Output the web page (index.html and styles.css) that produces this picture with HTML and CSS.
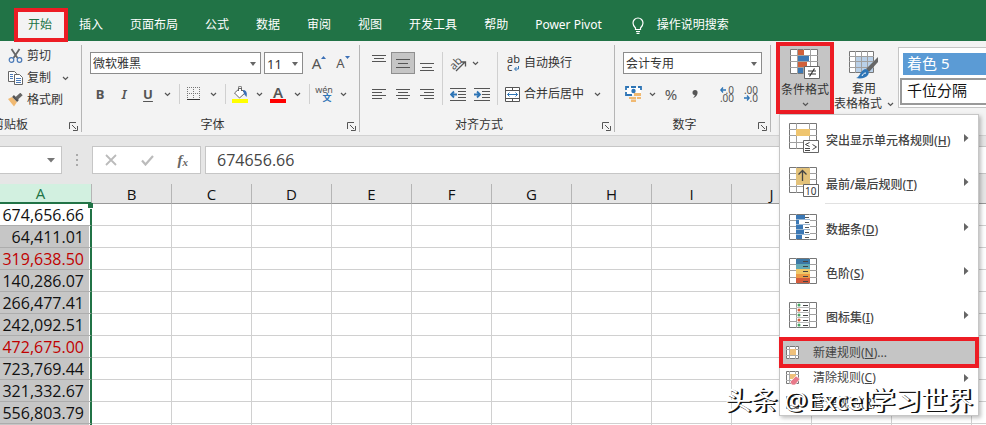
FILE: index.html
```html
<!DOCTYPE html>
<html lang="zh-CN">
<head>
    <meta charset="UTF-8">
    <meta name="viewport" content="width=device-width, initial-scale=1.0">
    <title>Excel</title>
    <link rel="stylesheet" href="styles.css">
</head>
<body>

    <!-- shared shapes -->
    <svg class="defs" width="0" height="0">
        <symbol id="chev" viewBox="0 0 7 5"><path d="M1 1l2.500 2.500L6 1" fill="none" stroke="#555" stroke-width="1.200"/></symbol>
        <symbol id="caret" viewBox="0 0 6 4"><path d="M0 0h6L3 4z" fill="#666"/></symbol>
        <symbol id="arrow" viewBox="0 0 5 8"><path d="M0 0l4.500 4L0 8z" fill="#666"/></symbol>
        <symbol id="launch" viewBox="0 0 9 9"><path d="M.5 7V.5H7M3 3l4 4M8.500 4v4.500H4" fill="none" stroke="#555"/></symbol>
        <symbol id="grid" viewBox="0 0 28 26"><path d="M.5.5h27v25H.5z" fill="#fff" stroke="#777"/><path d="M7.500 0v26M20.500 0v26M0 6.500h28M0 12.500h28M0 19.500h28" stroke="#a0a0a0"/></symbol>
    </svg>

    <nav class="tabs">
        <button class="tab active">开始</button>
        <button class="tab">插入</button>
        <button class="tab">页面布局</button>
        <button class="tab">公式</button>
        <button class="tab">数据</button>
        <button class="tab">审阅</button>
        <button class="tab">视图</button>
        <button class="tab">开发工具</button>
        <button class="tab">帮助</button>
        <button class="tab">Power Pivot</button>
        <button class="tab tell-me">
            <svg width="12" height="17" viewBox="0 0 12 17"><path d="M3.500 12.500V11C2 9.500 1 8 1 6a5 5 0 0 1 10 0c0 2-1 3.500-2.500 5v1.500zM4 14.500h4M4.500 16.300h3" fill="none" stroke="#fff" stroke-width="1.200"/></svg>
            操作说明搜索
        </button>
    </nav>

    <section class="ribbon">
        <div class="group clipboard">
            <div class="clip-list">
                <button class="clip">
                    <svg width="15" height="16" viewBox="0 0 15 16"><path d="M3.500 1l6 9M11.500 1L5.500 10" stroke="#666" stroke-width="1.800"/><circle cx="3.500" cy="12" r="2.300" fill="none" stroke="#4a7ab8" stroke-width="1.200"/><circle cx="11.500" cy="12" r="2.300" fill="none" stroke="#4a7ab8" stroke-width="1.200"/></svg>
                    剪切
                </button>
                <button class="clip">
                    <svg width="15" height="14" viewBox="0 0 15 14"><path d="M.5.5h6l2 2v8h-8z" fill="#fff" stroke="#666"/><path d="M6.500 3.500h5l3 3v7h-8z" fill="#fff" stroke="#666"/><path d="M2 3.500h3M2 5.500h3M2 7.500h3M8 7.500h5M8 9.500h5M8 11.500h5" stroke="#4a7ab8"/></svg>
                    复制
                    <svg class="clip-chev" width="7" height="5"><use href="#chev"/></svg>
                </button>
                <button class="clip">
                    <svg width="15" height="14" viewBox="0 0 15 14"><path d="M0 6l4-2 5 5-3 4.500z" fill="#f0b972"/><path d="M5 3l5 5" stroke="#555" stroke-width="2.500"/><path d="M8.500 5.500L13.500 1" stroke="#666" stroke-width="3.500"/></svg>
                    格式刷
                </button>
            </div>
            <div class="group-foot"><span>剪贴板</span><button class="launcher" aria-label="剪贴板设置"><svg width="9" height="9"><use href="#launch"/></svg></button></div>
        </div>

        <div class="group font">
            <div class="group-body">
                <div class="row combos">
                    <label class="combo font-name"><select aria-label="字体"><option>微软雅黑</option></select><svg width="6" height="4"><use href="#caret"/></svg></label>
                    <label class="combo font-size"><select aria-label="字号"><option>11</option></select><svg width="6" height="4"><use href="#caret"/></svg></label>
                    <button class="tool grow" aria-label="增大字号">A<svg width="5" height="3" viewBox="0 0 5 3"><path d="M0 3L2.500 0 5 3z" fill="#3b6fb5"/></svg></button>
                    <button class="tool shrink" aria-label="减小字号">A<svg width="5" height="3" viewBox="0 0 5 3"><path d="M0 0h5L2.500 3z" fill="#3b6fb5"/></svg></button>
                </div>
                <div class="row marks">
                    <button class="tool bold">B</button>
                    <button class="tool italic">I</button>
                    <button class="tool underline">U</button>
                    <button class="drop" aria-label="下划线"><svg width="7" height="5"><use href="#chev"/></svg></button>
                    <i class="sep"></i>
                    <button class="tool" aria-label="边框"><svg width="14" height="14" viewBox="0 0 14 14"><path d="M.5 0v13M6.500 0v13M12.500 0v13M0 .5h13M0 6.500h13" stroke="#777" stroke-dasharray="1 1"/><path d="M0 12.500h13" stroke="#333"/></svg></button>
                    <button class="drop" aria-label="边框选项"><svg width="7" height="5"><use href="#chev"/></svg></button>
                    <i class="sep"></i>
                    <button class="tool" aria-label="填充颜色"><svg width="16" height="17" viewBox="0 0 16 17"><path d="M2.500 7L8 2l5 5-5.500 5z" fill="#fff" stroke="#666"/><path d="M6.500 5V1.500a1.500 1.500 0 0 1 3 0V5" fill="none" stroke="#666"/><path d="M11 4c3 0 4.500 2.500 3.500 7L12 8z" fill="#3b6fb5"/><path d="M0 13h16v4H0z" fill="#ff0"/></svg></button>
                    <button class="drop" aria-label="填充选项"><svg width="7" height="5"><use href="#chev"/></svg></button>
                    <button class="tool font-color">A</button>
                    <button class="drop" aria-label="字体颜色"><svg width="7" height="5"><use href="#chev"/></svg></button>
                    <i class="sep"></i>
                    <button class="tool pinyin"><span>wén</span><b>文</b></button>
                    <button class="drop" aria-label="拼音选项"><svg width="7" height="5"><use href="#chev"/></svg></button>
                </div>
            </div>
            <div class="group-foot"><span>字体</span><button class="launcher" aria-label="字体设置"><svg width="9" height="9"><use href="#launch"/></svg></button></div>
        </div>

        <div class="group align">
            <div class="group-body align-body">
                <div class="align-grid">
                    <button class="tool" aria-label="顶端对齐"><svg width="14" height="16" viewBox="0 0 14 16"><path d="M0 .5h14M2 3.500h10M0 6.500h14" stroke="#555"/></svg></button>
                    <button class="tool pressed" aria-label="垂直居中"><svg width="14" height="16" viewBox="0 0 14 16"><path d="M0 4.500h14M2 8.500h10M0 12.500h14" stroke="#555"/></svg></button>
                    <button class="tool" aria-label="底端对齐"><svg width="14" height="16" viewBox="0 0 14 16"><path d="M0 8.500h14M2 12.500h10M0 15.500h14" stroke="#555"/></svg></button>
                    <button class="tool" aria-label="左对齐"><svg width="14" height="12" viewBox="0 0 14 12"><path d="M0 1.500h14M0 4.500h10M0 7.500h14M0 10.500h10" stroke="#555"/></svg></button>
                    <button class="tool" aria-label="居中"><svg width="14" height="12" viewBox="0 0 14 12"><path d="M0 1.500h14M2 4.500h10M0 7.500h14M2 10.500h10" stroke="#555"/></svg></button>
                    <button class="tool" aria-label="右对齐"><svg width="14" height="12" viewBox="0 0 14 12"><path d="M0 1.500h14M4 4.500h10M0 7.500h14M4 10.500h10" stroke="#555"/></svg></button>
                </div>
                <i class="sep tall"></i>
                <div class="indent-grid">
                    <button class="tool rotate" aria-label="方向"><span>ab</span><svg width="12" height="12" viewBox="0 0 12 12"><path d="M1 11L10 2M6 2h4.500v4.500" fill="none" stroke="#555" stroke-width="1.300"/></svg></button>
                    <button class="drop" aria-label="方向选项"><svg width="7" height="5"><use href="#chev"/></svg></button>
                    <button class="tool" aria-label="减少缩进"><svg width="16" height="13" viewBox="0 0 16 13"><path d="M0 .5h16M8 3.500h8M8 6.500h8M8 9.500h8M0 12.500h16" stroke="#555"/><path d="M7 6.500H2M4 3.500l-3 3 3 3" fill="none" stroke="#2e75b6" stroke-width="1.800"/></svg></button>
                    <button class="tool" aria-label="增加缩进"><svg width="16" height="13" viewBox="0 0 16 13"><path d="M0 .5h16M8 3.500h8M8 6.500h8M8 9.500h8M0 12.500h16" stroke="#555"/><path d="M0 6.500h5M3 3.500l3 3-3 3" fill="none" stroke="#2e75b6" stroke-width="1.800"/></svg></button>
                </div>
                <i class="sep tall"></i>
                <div class="wrap-list">
                    <button class="text-tool"><span class="abc">ab<br>c<svg width="5" height="5" viewBox="0 0 5 5"><path d="M4.500 0v3H1M2.500 1L.5 3l2 2" fill="none" stroke="#2e75b6"/></svg></span>自动换行</button>
                    <button class="text-tool">
                        <svg width="15" height="15" viewBox="0 0 15 15"><path d="M.5.5h14v14H.5zM0 3.500h15M0 11.500h15M7.500 0v3M7.500 12v3" fill="#fff" stroke="#555"/><path d="M2.500 7.500h10M4.500 5.500l-2 2 2 2M10.500 5.500l2 2-2 2" fill="none" stroke="#2e75b6"/></svg>
                        合并后居中
                        <svg class="merge-chev" width="7" height="5"><use href="#chev"/></svg>
                    </button>
                </div>
            </div>
            <div class="group-foot"><span>对齐方式</span><button class="launcher" aria-label="对齐设置"><svg width="9" height="9"><use href="#launch"/></svg></button></div>
        </div>

        <div class="group number">
            <div class="group-body">
                <label class="combo number-format"><select aria-label="数字格式"><option>会计专用</option></select><svg width="6" height="4"><use href="#caret"/></svg></label>
                <div class="row marks">
                    <button class="tool" aria-label="会计数字格式"><svg width="17" height="16" viewBox="0 0 17 16"><path d="M1 1h15v8H1z" fill="#fff"/><path d="M1 4V1h3M13 1h3v3M1 6v3h3M6 1h5M4 9h3" fill="none" stroke="#2e75b6" stroke-width="1.800"/><circle cx="8.500" cy="5" r="2.200" fill="#2e75b6"/><path d="M9 7h7v3H9zM4 11h7v2H4zM6 13.500h5V16H6zM12 11h4v2h-4z" fill="#f0b972"/></svg></button>
                    <button class="drop" aria-label="货币选项"><svg width="7" height="5"><use href="#chev"/></svg></button>
                    <button class="tool percent">%</button>
                    <button class="tool comma" aria-label="千位分隔样式"><svg width="6" height="8" viewBox="0 0 6 8"><path d="M3 0c2 0 3 1.500 2.500 3.500C5 6 3 7.500 1 8c1-1 1.800-2 1.800-3C1 5 .5 3.800.5 2.500.5 1 1.500 0 3 0z" fill="#555"/></svg></button>
                    <i class="sep"></i>
                    <button class="tool decimal"><span><svg width="6" height="6" viewBox="0 0 6 6"><path d="M6 3H1M3 .5L.8 3 3 5.500" fill="none" stroke="#2e75b6" stroke-width="1.300"/></svg>.0</span><span>.00</span></button>
                    <button class="tool decimal"><span>.00</span><span><svg width="6" height="6" viewBox="0 0 6 6"><path d="M0 3h5M3 .5L5.200 3 3 5.500" fill="none" stroke="#2e75b6" stroke-width="1.300"/></svg>.0</span></button>
                </div>
            </div>
            <div class="group-foot"><span>数字</span><button class="launcher" aria-label="数字设置"><svg width="9" height="9"><use href="#launch"/></svg></button></div>
        </div>

        <div class="styles">
            <div class="cond">
                <button class="big cond-btn">
                    <svg width="30" height="30" viewBox="0 0 30 30"><path d="M.5.5h27v24H.5z" fill="#fff" stroke="#777"/><path d="M7.500 0v25M13.500 0v25M20.500 0v25M0 6.500h28M0 12.500h28M0 18.500h28" stroke="#a0a0a0"/><path d="M8 1h6v5H8zM8 13h9v5H8z" fill="#d0603a"/><path d="M8 7h11v5H8zM8 19h5v5H8z" fill="#3b78b5"/><path d="M14.500 17.500h15v12h-15z" fill="#fff" stroke="#666"/><path d="M18 22h8M18 25h8M24.500 19.500l-5 8" stroke="#333" stroke-width="1.200"/></svg>
                    <span>条件格式</span>
                    <svg width="7" height="5"><use href="#chev"/></svg>
                </button>

                <!-- 条件格式 menu -->
                <ul class="menu">
                    <li><button class="item">
                        <svg width="30" height="30" viewBox="0 0 30 30"><use href="#grid" width="28" height="26"/><path d="M7 6h14v7H7z" fill="#efc56f"/><path d="M14.500 17.500h15v12h-15z" fill="#fff" stroke="#666"/><path d="M20.500 19.500l-4 2 4 2M16 25.500h5M16 27.500h5M23.500 21.500l4 2.500-4 2.500" fill="none" stroke="#444"/></svg>
                        <span>突出显示单元格规则(<u>H</u>)</span><svg class="more" width="5" height="8"><use href="#arrow"/></svg>
                    </button></li>
                    <li class="ruled"><button class="item">
                        <svg width="30" height="30" viewBox="0 0 30 30"><use href="#grid" width="28" height="26"/><path d="M7 1h14v17H7z" fill="#e3c27a"/><path d="M13.500 14V3.500M9.500 7.500l4-4 4 4" fill="none" stroke="#444" stroke-width="1.300"/><path d="M14.500 17.500h15v12h-15z" fill="#fff" stroke="#666"/><text x="16" y="28" class="badge-text">10</text></svg>
                        <span>最前/最后规则(<u>T</u>)</span><svg class="more" width="5" height="8"><use href="#arrow"/></svg>
                    </button></li>
                    <li><button class="item">
                        <svg width="30" height="26" viewBox="0 0 30 26"><use href="#grid" width="28" height="26"/><path d="M7 1h14v24H7z" fill="#fff"/><path d="M7 1h9v5H7zM7 6h3v5H7zM7 11h7v5H7zM7 16h8v5H7zM7 21h6v4H7z" fill="#3b78b5"/><path d="M7 5.500h14M7 10.500h14M7 15.500h14M7 20.500h14" stroke="#9db8d2"/><path d="M16 3.500h4M16 8.500h4M16 13.500h4M16 18.500h4M16 23.500h4" stroke="#555"/></svg>
                        <span>数据条(<u>D</u>)</span><svg class="more" width="5" height="8"><use href="#arrow"/></svg>
                    </button></li>
                    <li><button class="item">
                        <svg width="30" height="26" viewBox="0 0 30 26"><use href="#grid" width="28" height="26"/><path d="M7 1h14v5H7z" fill="#3b78a5"/><path d="M7 6h14v5H7z" fill="#62a9b5"/><path d="M7 11h14v5H7z" fill="#efc868"/><path d="M7 16h14v4H7z" fill="#ec9a45"/><path d="M7 20h14v5H7z" fill="#d35b3c"/><path d="M14 3.500h5M14 8.500h5M14 13.500h5M14 18.500h5M14 23.500h5" stroke="#444"/></svg>
                        <span>色阶(<u>S</u>)</span><svg class="more" width="5" height="8"><use href="#arrow"/></svg>
                    </button></li>
                    <li><button class="item">
                        <svg width="30" height="26" viewBox="0 0 30 26"><use href="#grid" width="28" height="26"/><path d="M8 1h12v24H8z" fill="#fff"/><path d="M7 5.500h14M7 10.500h14M7 15.500h14M7 20.500h14" stroke="#bbb"/><path d="M14 3.500h5M14 8.500h5M14 13.500h5M14 18.500h5M14 23.500h5" stroke="#444"/><circle cx="10" cy="3" r="1.500" fill="#4aa564"/><circle cx="10" cy="8" r="1.500" fill="#d3603c"/><circle cx="10" cy="13" r="1.500" fill="#4aa564"/><circle cx="10" cy="18" r="1.500" fill="#d3603c"/><circle cx="10" cy="23" r="1.500" fill="#4aa564"/></svg>
                        <span>图标集(<u>I</u>)</span><svg class="more" width="5" height="8"><use href="#arrow"/></svg>
                    </button></li>
                    <li class="small-first"><button class="item small selected">
                        <svg width="14" height="14" viewBox="0 0 14 14"><path d="M.5.5h12v12H.5z" fill="#fff" stroke="#777"/><path d="M3.500 0v13M9.500 0v13M0 3.500h13M0 9.500h13" stroke="#aaa"/><path d="M4 3h6v6H4z" fill="#efc07a"/></svg>
                        <span>新建规则(<u>N</u>)...</span>
                    </button></li>
                    <li><button class="item small">
                        <svg width="14" height="14" viewBox="0 0 14 14"><path d="M.5.5h12v12H.5z" fill="#fff" stroke="#777"/><path d="M3.500 0v13M9.500 0v13M0 3.500h13M0 9.500h13" stroke="#aaa"/><path d="M4 3h6v5H4z" fill="#efc07a"/><path d="M4 11l6-6 4 3-5 6H6z" fill="#e8798a" stroke="#fff" stroke-width=".6"/></svg>
                        <span>清除规则(<u>C</u>)</span><svg class="more" width="5" height="8"><use href="#arrow"/></svg>
                    </button></li>
                    <li><button class="item small">
                        <svg width="14" height="14" viewBox="0 0 14 14"><path d="M.5.5h12v12H.5z" fill="#fff" stroke="#777"/><path d="M3.500 0v13M9.500 0v13M0 3.500h13M0 9.500h13" stroke="#aaa"/></svg>
                        <span>管理规则(<u>R</u>)...</span>
                    </button></li>
                </ul>
            </div>

            <button class="big table-btn">
                <svg width="30" height="30" viewBox="0 0 30 30"><path d="M.5.5h24v21H.5z" fill="#fff" stroke="#777"/><path d="M7 6h17v15H7z" fill="#b9d0e8"/><path d="M6.500 0v22M12.500 0v22M18.500 0v22M0 5.500h25M0 10.500h25M0 16.500h25" stroke="#a0a0a0"/><path d="M29 6v5l-9 10-3-3z" fill="#666"/><path d="M16 18c3 0 5 3 3 6-2 3-7 4-12 3 4-1 4-7 9-9z" fill="#2e75b6"/><path d="M13 25c1-2 2-3 4-3" stroke="#fff" fill="none"/></svg>
                <span>套用</span>
                <span class="table-name">表格格式 <svg width="7" height="5"><use href="#chev"/></svg></span>
            </button>

            <div class="gallery">
                <button class="style accent">着色 5</button>
                <button class="style thousand">千位分隔</button>
            </div>
        </div>
    </section>

    <div class="formula-bar">
        <div class="name-box"><input type="text" aria-label="名称框"><svg width="8" height="5" viewBox="0 0 8 5"><path d="M0 0h8L4 4.500z" fill="#777"/></svg></div>
        <svg class="dots" width="2" height="12" viewBox="0 0 2 12"><path d="M0 0h2v2H0zM0 5h2v2H0zM0 10h2v2H0z" fill="#aaa"/></svg>
        <div class="fx-box">
            <button aria-label="取消"><svg width="12" height="12" viewBox="0 0 12 12"><path d="M1 1l10 10M11 1L1 11" stroke="#bbb" stroke-width="1.800"/></svg></button>
            <button aria-label="输入"><svg width="13" height="11" viewBox="0 0 13 11"><path d="M1 5.500L4.500 9.500 12 1" fill="none" stroke="#bbb" stroke-width="2.200"/></svg></button>
            <button class="fx">f<sub>x</sub></button>
        </div>
        <input class="formula" type="text" value="674656.66" aria-label="编辑栏">
    </div>

    <table class="sheet">
        <colgroup><col class="col-a"><col class="col" span="11"><col></colgroup>
        <thead>
            <tr><th class="picked">A</th><th>B</th><th>C</th><th>D</th><th>E</th><th>F</th><th>G</th><th>H</th><th>I</th><th>J</th><th>K</th><th>L</th><th></th></tr>
        </thead>
        <tbody id="rows"></tbody>
    </table>

    <div class="watermark">头条 @Excel学习世界</div>

    <script src="script.js"></script>
</body>
</html>
```
FILE: styles.css
```css
* {
    margin: 0;
    padding: 0;
    box-sizing: border-box;
}
body {
    font-family: "Noto Sans", "Noto Sans CJK SC", sans-serif;
    font-size: 12px;
    line-height: 16px;
    color: #333;
    background-color: white;
    height: 100vh;
    overflow: hidden;
    position: relative;
}
button, input, select {
    font: inherit;
    color: inherit;
    border: none;
    background: none;
    outline: none;
}
button {
    display: flex;
    align-items: center;
    justify-content: center;
    white-space: nowrap;
}
svg {
    display: block;
    flex: none;
}
.defs {
    position: absolute;
}

/* tabs */
.tabs {
    display: flex;
    align-items: flex-start;
    height: 41px;
    padding: 8px 0 0 14px;
    background-color: #217346;
    position: relative;
    z-index: 2;
}
.tab {
    height: 34px;
    padding: 0 13px 0 14px;
    color: white;
}
.tab.active {
    padding: 0 12px 0 10px;
    margin-right: -3px;
    border: 4px solid #ed1c24;
    background-color: #f3f3f3;
    color: #217346;
}
.tell-me {
    gap: 13px;
    padding-left: 17px;
}

/* ribbon */
.ribbon {
    display: flex;
    height: 95px;
    background-color: #f3f3f3;
    border-bottom: 1px solid #d2d2d2;
    position: relative;
}
.group {
    display: flex;
    flex-direction: column;
    justify-content: space-between;
    flex: none;
    height: 87px;
    margin-top: 4px;
    border-right: 1px solid #b5b5b5;
}
.group-body {
    display: flex;
    flex-direction: column;
    gap: 9px;
    padding: 7px 8px 0;
}
.group-foot {
    display: flex;
    align-items: center;
    height: 14px;
}
.group-foot span {
    flex: 1;
    text-align: center;
}
.launcher {
    margin: 2px 3px 0 4px;
}
.row {
    display: flex;
    align-items: center;
    height: 22px;
}
.tool {
    flex: none;
    width: 24px;
    height: 22px;
    color: #555;
}
.drop {
    flex: none;
    width: 14px;
    height: 22px;
}
.sep {
    width: 1px;
    height: 20px;
    margin: 0 2px 0 5px;
    background-color: #d0d0d0;
}
.sep.tall {
    height: auto;
    margin: 0 3px;
}
.combo {
    display: block;
    flex: none;
    position: relative;
    height: 22px;
    background-color: white;
    border: 1px solid #8c8c8c;
}
.combo select {
    appearance: none;
    width: 100%;
    height: 20px;
    padding: 2px 0 0 2px;
}
.combo svg {
    position: absolute;
    right: 4px;
    top: 9px;
}

/* clipboard */
.clipboard {
    width: 127px;
    margin-left: -45px;
}
.clip-list {
    padding-left: 53px;
}
.clip {
    height: 22px;
    gap: 4px;
}
.clip-chev {
    margin-left: 7px;
}

/* font */
.font {
    width: 278px;
}
.font-name {
    width: 171px;
    margin-right: 3px;
}
.font-size {
    width: 39px;
}
.font-size select {
    font-size: 13px;
}
.marks {
    margin-left: -2px;
}
.grow, .shrink {
    align-items: flex-start;
    line-height: 22px;
    font-size: 15px;
}
.grow {
    margin-left: 4px;
}
.shrink {
    font-size: 13px;
}
.grow svg, .shrink svg {
    margin-top: 4px;
}
.bold, .underline {
    font-size: 13px;
    font-weight: bold;
}
.italic {
    font-size: 13px;
    font-style: italic;
    font-weight: 600;
}
.underline {
    text-decoration: underline;
    text-underline-offset: 2px;
}
.font-color {
    width: 16px;
    height: 18px;
    margin: 0 4px;
    font-size: 15px;
    font-weight: 600;
    line-height: 14px;
    border-bottom: 4px solid red;
}
.pinyin {
    flex-direction: column;
    font-size: 9px;
    line-height: 8px;
}
.pinyin b {
    padding-left: 6px;
    color: #2e75b6;
}

/* alignment */
.align {
    width: 255px;
}
.align-body {
    flex-direction: row;
    gap: 0;
    padding: 7px 0 0 7px;
}
.align-grid, .indent-grid {
    display: grid;
    grid-template-columns: repeat(3, 24px);
    grid-auto-rows: 22px;
    row-gap: 9px;
}
.indent-grid {
    grid-template-columns: repeat(2, 24px);
}
.pressed {
    background-color: #c5c5c5;
    border: 1px solid #8f8f8f;
}
.rotate span {
    rotate: -45deg;
    font-size: 11px;
    line-height: 10px;
    margin-right: -7px;
}
.rotate svg {
    margin-top: 6px;
}
.indent-grid .drop {
    width: 10px;
}
.wrap-list {
    display: flex;
    flex-direction: column;
    gap: 9px;
    padding-left: 4px;
}
.text-tool {
    height: 22px;
    gap: 4px;
    justify-content: flex-start;
}
.abc {
    width: 15px;
    text-align: left;
    padding-left: 2px;
    font-size: 11px;
    line-height: 8px;
}
.abc svg {
    display: inline-block;
    margin-left: 2px;
}
.merge-chev {
    margin-left: 6px;
}

/* number */
.number {
    width: 156px;
}
.percent {
    font-size: 15px;
}
.decimal {
    flex-direction: column;
    align-items: flex-end;
    padding-right: 4px;
    font-size: 10px;
    line-height: 8px;
}
.decimal span {
    display: flex;
    align-items: center;
}

/* styles */
.styles {
    display: flex;
    flex: 1;
    min-width: 0;
    padding: 1px 0 0 5px;
}
.cond {
    position: relative;
    flex: none;
}
.big {
    flex: none;
    flex-direction: column;
    line-height: 14px;
    justify-content: flex-start;
}
.cond-btn {
    width: 58px;
    height: 72px;
    padding-top: 3px;
    background-color: #c5c5c5;
    border: 4px solid #ed1c24;
}
.cond-btn span {
    margin: 4px 0 5px;
}
.table-btn {
    width: 60px;
    height: 72px;
    padding-top: 9px;
}
.table-btn span {
    margin-top: 1px;
}
.table-btn .table-name {
    display: flex;
    align-items: center;
    gap: 5px;
}
.gallery {
    flex: 1;
    min-width: 0;
    height: 61px;
    margin: 5px 0 0 4px;
    padding: 5px 0 0 1px;
    background-color: white;
    border: 1px solid #c5c5c5;
    border-right: none;
    overflow: hidden;
}
.style {
    width: 100%;
    justify-content: flex-start;
    font-size: 15px;
}
.accent {
    height: 22px;
    margin-left: 3px;
    padding: 0 0 3px 4px;
    background-color: #5b9bd5;
    color: white;
}
.thousand {
    height: 27px;
    margin-top: 3px;
    padding: 0 0 3px 5px;
    border: 2px solid #999;
    border-right: none;
    color: #111;
}

/* menu */
.menu {
    position: absolute;
    left: 3px;
    top: 72px;
    z-index: 3;
    width: 200px;
    padding: 1px 0 0;
    list-style: none;
    background-color: white;
    border: 1px solid #c6c6c6;
    box-shadow: 2px 2px 4px rgba(0, 0, 0, 0.25);
}
.item {
    position: relative;
    width: 100%;
    height: 44px;
    padding: 0 9px;
    justify-content: flex-start;
    gap: 7px;
    color: #444;
}
.item span {
    padding-top: 5px;
    font-weight: 500;
}
.item .more {
    margin-left: auto;
}
.ruled {
    margin-bottom: 1px;
    background: linear-gradient(#e1e1e1, #e1e1e1) 45px 100% / 100% 1px no-repeat;
}
.small-first {
    margin-top: 3px;
}
.item.small {
    height: 25px;
    padding-left: 6px;
    gap: 13px;
}
.item.small span {
    padding-top: 0;
    font-weight: normal;
}
.item.selected {
    background-color: #c5c5c5;
    z-index: 1;
}
.item.selected::after {
    content: "";
    position: absolute;
    inset: -3px -1px;
    border: 4px solid #ed1c24;
}
.badge-text {
    font-size: 10px;
    fill: #333;
}

/* formula bar */
.formula-bar {
    display: flex;
    align-items: center;
    height: 48px;
    background-color: #e6e6e6;
}
.name-box, .fx-box, .formula {
    height: 28px;
    background-color: white;
    border: 1px solid #c6c6c6;
}
.name-box {
    display: flex;
    align-items: center;
    width: 62px;
    padding-right: 6px;
    border-left: none;
}
.name-box input {
    flex: 1;
    min-width: 0;
}
.dots {
    margin: 0 14px;
}
.fx-box {
    display: flex;
    align-items: center;
    justify-content: space-between;
    width: 109px;
    margin-right: 4px;
    padding: 0 12px;
}
.fx {
    font-family: "Liberation Serif", serif;
    font-size: 15px;
    font-style: italic;
    font-weight: bold;
    color: #666;
}
.fx sub {
    font-size: 11px;
    margin-top: 4px;
}
.formula {
    flex: 1;
    min-width: 0;
    padding-left: 11px;
    border-right: none;
    font-family: "Open Sans", sans-serif;
    font-size: 16px;
    color: #444;
}

/* sheet */
.sheet {
    width: 100%;
    table-layout: fixed;
    border-collapse: separate;
    border-spacing: 0;
    font-family: "Open Sans", sans-serif;
    font-size: 16px;
    line-height: 20px;
    color: #111;
}
.col-a {
    width: 92px;
}
.col {
    width: 80px;
}
.sheet th {
    height: 20px;
    font-size: 15px;
    font-weight: normal;
    line-height: 18px;
    background-color: #e6e6e6;
    border-right: 1px solid #b5b5b5;
    border-bottom: 1px solid #999;
}
.sheet th.picked {
    padding-right: 10px;
    background-color: #d2f0e0;
    border-bottom: 2px solid #217346;
    color: #217346;
}
.sheet td {
    height: 22px;
    border-right: 1px solid #d0d0d0;
    border-bottom: 1px solid #d0d0d0;
}
.sheet td:first-child {
    padding-right: 6px;
    text-align: right;
    background-color: #c6c6c6;
    border-right: 2px solid #217346;
    border-bottom-color: #adadad;
    box-shadow: inset -1px 0 white;
}
.sheet tr:first-child td:first-child {
    position: relative;
    background-color: white;
}
.sheet th:last-child, .sheet td:last-child {
    border-right: none;
}
/* selection handle */
.sheet tbody tr:first-child td:first-child::after {
    content: "";
    position: absolute;
    top: -1px;
    right: -3px;
    width: 5px;
    height: 5px;
    background-color: #217346;
    border-bottom: 1px solid white;
}
.sheet td.red {
    color: #c00000;
}

.watermark {
    position: absolute;
    right: 13px;
    bottom: 7px;
    z-index: 5;
    font-size: 26px;
    line-height: 36px;
    color: white;
    white-space: nowrap;
    text-shadow: 1px 1px 0 #111, 2px 1px 0 #111;
    pointer-events: none;
}
```
FILE: script.js
```js
const values = [
    "674,656.66", "64,411.01", "319,638.50", "140,286.07", "266,477.41",
    "242,092.51", "472,675.00", "723,769.44", "321,332.67", "556,803.79", ""
];
const red = ["319,638.50", "472,675.00"];

const rows = document.getElementById("rows");

values.forEach(value => {
    const tr = rows.insertRow();
    const first = tr.insertCell();
    first.innerText = value;
    if (red.includes(value)) {
        first.className = "red";
    }
    for (let i = 0; i < 12; i++) {
        tr.insertCell();
    }
});
```
